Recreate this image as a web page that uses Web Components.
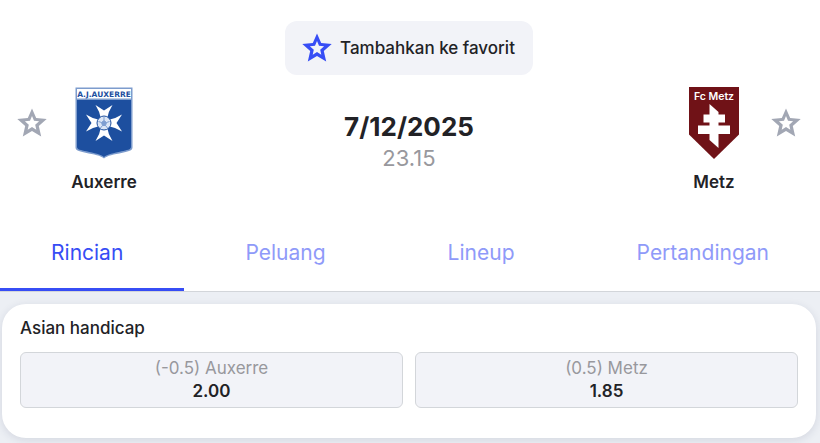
<!DOCTYPE html>
<html lang="id">
<head>
<meta charset="UTF-8">
<meta name="viewport" content="width=device-width, initial-scale=1.0">
<title>Auxerre - Metz</title>
<style>
    :root {
        --primary-color: #374df5;
        --primary-soft: #8f9af9;
        --text-color: #222226;
        --muted-color: #98989d;
        --surface: #f2f3f8;
        --page-bg: #eceff4;
        --line: #d3d6da;
    }

    body {
        margin: 0;
        min-height: 100vh;
        background: var(--page-bg);
        color: var(--text-color);
        font-family: Inter, "Liberation Sans", sans-serif;
    }
</style>
</head>
<body>
    <match-header>
        <favorite-button slot="favorite">Tambahkan ke favorit</favorite-button>
        <team-badge slot="home" label="Favoritkan Auxerre">
            <auxerre-crest slot="crest"></auxerre-crest>
            Auxerre
        </team-badge>
        <match-time date="7/12/2025" time="23.15"></match-time>
        <team-badge slot="away" label="Favoritkan Metz" reverse>
            <metz-crest slot="crest"></metz-crest>
            Metz
        </team-badge>
    </match-header>
    <match-tabs></match-tabs>
    <odds-card>
        <span slot="title">Asian handicap</span>
        <odds-option value="2.00">(-0.5) Auxerre</odds-option>
        <odds-option value="1.85">(0.5) Metz</odds-option>
    </odds-card>

<script>
class starIcon extends HTMLElement {
    constructor(){
        super();
        this.attachShadow({mode: "open"}).innerHTML = `
        <style>
        :host{
            display: block;
            width: 30px;
            height: 30px;
            flex: none;
        }

        svg{
            display: block;
            width: 100%;
            height: 100%;
        }
        </style>
        <svg viewBox="0 0 30 30" aria-hidden="true">
            <path fill-rule="evenodd" fill="currentColor" d="M15 .4 19.200 9.900 29.700 10.900 21.800 17.900 24.200 28.400 15 22.900 5.800 28.400 8.200 17.900 .3 10.900 10.800 9.900ZM15 8 13 12.800 7.900 13.300 11.800 16.700 10.700 21.700 15 19.100 19.300 21.700 18.200 16.700 22.100 13.300 17 12.800Z"/>
        </svg>
        `;
    }
}
customElements.define("star-icon", starIcon);

class favoriteButton extends HTMLElement {
    constructor(){
        super();
        this.attachShadow({mode: "open"}).innerHTML = `
        <style>
        :host{
            display: block;
        }

        button{
            display: flex;
            align-items: center;
            gap: 8px;
            height: 54px;
            padding: 0 18px 0 17px;
            border: 0;
            border-radius: 12px;
            background: var(--surface);
            color: inherit;
            font: 500 17px/24px Inter, "Liberation Sans", sans-serif;
            cursor: pointer;
        }

        star-icon{
            color: var(--primary-color);
        }
        </style>
        <button type="button"><star-icon></star-icon><span><slot></slot></span></button>
        `;
    }
}
customElements.define("favorite-button", favoriteButton);

class auxerreCrest extends HTMLElement {
    constructor(){
        super();
        // one arm of the cross, turned round the ball
        const arm = "M26 32Q25 25 20.500 18l8.500 5.500 8.500-5.500Q33 25 32 32Z";

        this.attachShadow({mode: "open"}).innerHTML = `
        <style>
        :host, svg{
            display: block;
        }
        </style>
        <svg width="58" height="72" viewBox="0 0 58 72" role="img" aria-label="AJ Auxerre">
            <path d="M.5.5h57v60c0 3-4 4-10 5.200C39 67.500 32 68.500 29 71.500 26 68.500 19 67.500 10.500 65.700 4.500 64.500.5 63.500.5 60.500Z" fill="#7d9ccd"/>
            <path d="M2 2h54v9.500H2Z" fill="#fff"/>
            <path d="M2 13h54v47c0 2.500-4 3.200-9.500 4.300C39 66 32 67.500 29 70 26 67.500 19 66 11.500 64.300 6 63.200 2 62.500 2 60Z" fill="#1d4f9f"/>
            <text x="29" y="10" text-anchor="middle" font-family="DejaVu Sans, sans-serif" font-weight="700" font-size="7.500" fill="#1d4f9f">A.J.AUXERRE</text>
            <g fill="#fff">
                <path d="${arm}"/>
                <path d="${arm}" transform="rotate(90 29 36)"/>
                <path d="${arm}" transform="rotate(180 29 36)"/>
                <path d="${arm}" transform="rotate(270 29 36)"/>
            </g>
            <circle cx="29" cy="36" r="7" fill="#dce6f5" stroke="#1d4f9f"/>
            <path d="m29 33.500 2.500 2-1 3h-3l-1-3ZM29 30v3.500M34.500 34.500l-3 1M32.500 41l-2-2.500M25.500 41l2-2.500M23.500 34.500l3 1" fill="#7f9fd1" stroke="#7f9fd1"/>
        </svg>
        `;
    }
}
customElements.define("auxerre-crest", auxerreCrest);

class metzCrest extends HTMLElement {
    constructor(){
        super();
        this.attachShadow({mode: "open"}).innerHTML = `
        <style>
        :host, svg{
            display: block;
        }
        </style>
        <svg width="50" height="72" viewBox="0 0 50 72" role="img" aria-label="FC Metz">
            <path d="M0 0h50v47.500L25 72 0 47.500Z" fill="#701217"/>
            <text x="25" y="13" text-anchor="middle" font-family="Inter, sans-serif" font-weight="600" font-size="10.500" fill="#fff">Fc Metz</text>
            <path d="M20.500 17 29.500 25v2.500h6.500v8h-6.500v3H41v8.500H29.500v14l-9-8V47H9v-8.500h11.500v-3H14.500v-8h6Z" fill="#fff"/>
        </svg>
        `;
    }
}
customElements.define("metz-crest", metzCrest);

class teamBadge extends HTMLElement {
    constructor(){
        super();
        this.attachShadow({mode: "open"}).innerHTML = `
        <style>
        :host{
            display: flex;
            align-items: flex-start;
        }

        :host([reverse]){
            flex-direction: row-reverse;
        }

        button{
            margin: 21px 0 0;
            padding: 0;
            border: 0;
            background: none;
            color: #a2a7b4;
            cursor: pointer;
        }

        .team{
            display: flex;
            flex-direction: column;
            align-items: center;
            gap: 11px;
            width: 114px;
            font-size: 17px;
            font-weight: 600;
            line-height: 24px;
        }
        </style>
        <button type="button"><star-icon></star-icon></button>
        <div class="team">
            <slot name="crest"></slot>
            <span><slot></slot></span>
        </div>
        `;
        this.shadowRoot.querySelector("button").setAttribute("aria-label", this.getAttribute("label"));
    }
}
customElements.define("team-badge", teamBadge);

class matchTime extends HTMLElement {
    constructor(){
        super();
        this.attachShadow({mode: "open"}).innerHTML = `
        <style>
        :host{
            display: flex;
            flex-direction: column;
            align-items: center;
            padding-top: 24px;
        }

        .date{
            font-size: 26px;
            font-weight: 700;
            line-height: 32px;
        }

        .time{
            color: var(--muted-color);
            font-size: 22px;
            line-height: 30px;
        }
        </style>
        <span class="date">${this.getAttribute("date")}</span>
        <span class="time">${this.getAttribute("time")}</span>
        `;
    }
}
customElements.define("match-time", matchTime);

class matchHeader extends HTMLElement {
    constructor(){
        super();
        this.attachShadow({mode: "open"}).innerHTML = `
        <style>
        :host{
            display: block;
            padding: 21px 19px 0 17px;
            background: #fff;
        }

        .favorite{
            display: flex;
            justify-content: center;
        }

        .teams{
            display: flex;
            justify-content: space-between;
            padding: 12px 0 18px;
        }
        </style>
        <div class="favorite"><slot name="favorite"></slot></div>
        <div class="teams">
            <slot name="home"></slot>
            <slot></slot>
            <slot name="away"></slot>
        </div>
        `;
    }
}
customElements.define("match-header", matchHeader);

class matchTabs extends HTMLElement {
    constructor(){
        super();
        this.attachShadow({mode: "open"}).innerHTML = `
        <style>
        :host{
            display: block;
            background: #fff;
            border-bottom: 1px solid var(--line);
        }

        nav{
            display: flex;
        }

        a{
            flex: 1 1 auto;
            padding: 27px 10px 21px;
            border-bottom: 3px solid transparent;
            color: var(--primary-soft);
            font-size: 21px;
            font-weight: 400;
            line-height: 28px;
            text-align: center;
            text-decoration: none;
        }

        a:first-child{
            padding-left: 0;
        }

        a:last-child{
            padding-right: 0;
        }

        a.active{
            color: var(--primary-color);
            border-color: var(--primary-color);
        }
        </style>
        <nav>
            <a href="#rincian" class="active" aria-current="page">Rincian</a>
            <a href="#peluang">Peluang</a>
            <a href="#lineup">Lineup</a>
            <a href="#pertandingan">Pertandingan</a>
        </nav>
        `;
    }
}
customElements.define("match-tabs", matchTabs);

class oddsOption extends HTMLElement {
    constructor(){
        super();
        this.attachShadow({mode: "open"}).innerHTML = `
        <style>
        :host{
            display: block;
        }

        button{
            display: flex;
            flex-direction: column;
            align-items: center;
            width: 100%;
            padding: 4px 8px;
            border: 1px solid var(--line);
            border-radius: 6px;
            background: var(--surface);
            color: var(--muted-color);
            font: 400 17px/23px Inter, "Liberation Sans", sans-serif;
            cursor: pointer;
        }

        strong{
            color: var(--text-color);
            font-weight: 600;
        }
        </style>
        <button type="button">
            <span><slot></slot></span>
            <strong>${this.getAttribute("value")}</strong>
        </button>
        `;
    }
}
customElements.define("odds-option", oddsOption);

class oddsCard extends HTMLElement {
    constructor(){
        super();
        this.attachShadow({mode: "open"}).innerHTML = `
        <style>
        :host{
            display: block;
            margin: 12px 4px 0 2px;
            padding: 12px 18px 30px;
            border-radius: 24px;
            background: #fff;
            box-shadow: 0 2px 8px rgba(30, 40, 80, 0.12);
        }

        h2{
            margin: 0 0 12px;
            font-size: 17px;
            font-weight: 500;
            line-height: 24px;
        }

        .options{
            display: grid;
            grid-template-columns: 1fr 1fr;
            gap: 12px;
        }
        </style>
        <h2><slot name="title"></slot></h2>
        <div class="options"><slot></slot></div>
        `;
    }
}
customElements.define("odds-card", oddsCard);
</script>
</body>
</html>
